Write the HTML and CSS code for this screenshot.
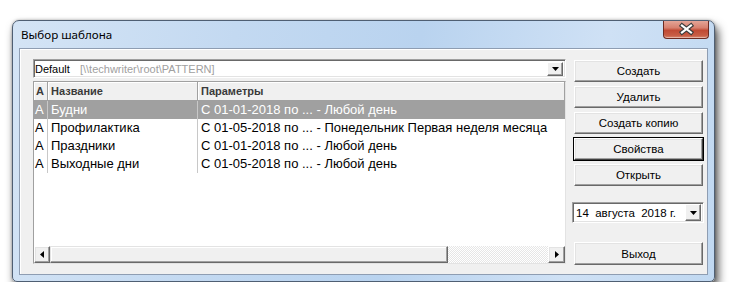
FILE: index.html
```html
<!DOCTYPE html>
<html lang="ru">
<head>
<meta charset="utf-8">
<title>Выбор шаблона</title>
<link rel="stylesheet" href="styles.css">
</head>
<body>
<div class="window">
  <div class="titlebar">
    <span class="title">Выбор шаблона</span>
    <div class="close">
      <svg width="46" height="18" viewBox="0 0 46 18">
        <path d="M18 5.5 L27 12.5 M27 5.5 L18 12.5" stroke="#3b3b3b" stroke-width="4.4" stroke-linecap="square"/>
        <path d="M18 5.5 L27 12.5 M27 5.5 L18 12.5" stroke="#ffffff" stroke-width="2.2" stroke-linecap="square"/>
      </svg>
    </div>
  </div>
  <div class="client">
    <div class="left">
      <div class="combo">
        <span class="combo-text">Default <span class="path">[\\techwriter\root\PATTERN]</span></span>
        <span class="drop"><svg width="7" height="4" viewBox="0 0 7 4"><path d="M0 0 H7 L3.5 4 Z" fill="#000"/></svg></span>
      </div>
      <div class="list">
        <div class="lrow head">
          <div class="hcell c-a">A</div>
          <div class="hcell">Название</div>
          <div class="hcell">Параметры</div>
        </div>
        <div class="rows">
          <div class="lrow item selected">
            <div class="cell c-a">А</div>
            <div class="cell">Будни</div>
            <div class="cell">С 01-01-2018 по ... - Любой день</div>
          </div>
          <div class="lrow item">
            <div class="cell c-a">А</div>
            <div class="cell">Профилактика</div>
            <div class="cell">С 01-05-2018 по ... - Понедельник Первая неделя месяца</div>
          </div>
          <div class="lrow item">
            <div class="cell c-a">А</div>
            <div class="cell">Праздники</div>
            <div class="cell">С 01-01-2018 по ... - Любой день</div>
          </div>
          <div class="lrow item">
            <div class="cell c-a">А</div>
            <div class="cell">Выходные дни</div>
            <div class="cell">С 01-05-2018 по ... - Любой день</div>
          </div>
        </div>
        <div class="hscroll">
          <div class="sbtn"><svg width="4" height="7" viewBox="0 0 4 7"><path d="M4 0 V7 L0 3.5 Z" fill="#000"/></svg></div>
          <div class="thumb"></div>
          <div class="track"></div>
          <div class="sbtn"><svg width="4" height="7" viewBox="0 0 4 7"><path d="M0 0 V7 L4 3.5 Z" fill="#000"/></svg></div>
        </div>
      </div>
    </div>
    <div class="right">
      <div class="btn">Создать</div>
      <div class="btn">Удалить</div>
      <div class="btn">Создать копию</div>
      <div class="btn default">Свойства</div>
      <div class="btn">Открыть</div>
      <div class="date">
        <span class="date-text">14 &nbsp;августа &nbsp;2018 г.</span>
        <span class="drop"><svg width="7" height="4" viewBox="0 0 7 4"><path d="M0 0 H7 L3.5 4 Z" fill="#000"/></svg></span>
      </div>
      <div class="btn exit">Выход</div>
    </div>
  </div>
</div>
</body>
</html>
```
FILE: styles.css
```css
html, body {
  margin: 0;
  background: #ffffff;
}
body {
  font-family: "Liberation Sans", Arial, sans-serif;
  color: #000;
}
.window {
  margin: 20px 0 0 12px;
  width: 703px;
  height: 262px;
  box-sizing: border-box;
  border: 1px solid #4f5f73;
  border-radius: 7px 7px 5px 5px;
  background: linear-gradient(100deg, #d4e4f5 0%, #c3d9f1 30%, #b9d3ef 55%, #cfe1f5 80%, #c0d8f1 100%);
  box-shadow: 3px 6px 10px rgba(0,0,0,0.7), 0 0 3px rgba(0,0,0,0.3);
  display: flex;
  flex-direction: column;
}
.titlebar {
  height: 27px;
  flex: none;
  display: flex;
  justify-content: space-between;
  align-items: flex-start;
}
.title {
  font-family: "Noto Sans", "Open Sans", sans-serif;
  font-size: 11.6px;
  padding: 6px 0 0 8px;
  color: #000;
}
.close {
  width: 46px;
  height: 18px;
  margin-right: 5px;
  box-sizing: border-box;
  border: 1px solid #6d2b22;
  border-top: none;
  border-radius: 0 0 4px 4px;
  background: linear-gradient(#e4a597 0%, #d7806f 40%, #c04a34 55%, #c85d45 85%, #d9876f 100%);
  box-shadow: inset 0 -1px rgba(255,255,255,0.4);
}
.close svg {
  display: block;
  margin-top: -1px;
}
.client {
  flex: 1;
  margin: 0 6px 6px 6px;
  background: #f0f0f0;
  border: 1px solid #8e9db2;
  box-shadow: inset 1px 1px #ffffff;
  display: flex;
  gap: 6px;
  padding: 10px 0 0 13px;
}
.left {
  width: 533px;
  display: flex;
  flex-direction: column;
}
.combo, .date {
  box-sizing: border-box;
  height: 19px;
  background: #fff;
  border: 1px solid;
  border-color: #a0a0a0 #ffffff #ffffff #a0a0a0;
  box-shadow: inset 1px 1px #696969, inset -1px -1px #e3e3e3;
  display: flex;
  align-items: center;
  justify-content: space-between;
  font-size: 11px;
  padding: 0 2px 0 1px;
}
.combo-text {
  white-space: pre;
  padding-left: 0;
}
.path {
  color: #a0a0a0;
  margin-left: 7px;
}
.drop {
  width: 16px;
  height: 14px;
  box-sizing: border-box;
  background: #f0f0f0;
  border: 1px solid;
  border-color: #ffffff #696969 #696969 #ffffff;
  box-shadow: inset -1px -1px #a0a0a0;
  display: flex;
  align-items: center;
  justify-content: center;
}
.list {
  margin-top: 3px;
  height: 183px;
  box-sizing: border-box;
  border: 1px solid;
  border-color: #a0a0a0 #e3e3e3 #e3e3e3 #a0a0a0;
  background: #fff;
  display: flex;
  flex-direction: column;
}
.lrow {
  display: grid;
  grid-template-columns: 14px 150px 1fr;
}
.head {
  height: 19px;
  background: #f0f0f0;
}
.hcell {
  box-sizing: border-box;
  border-right: 1px solid #a0a0a0;
  border-bottom: 1px solid #a0a0a0;
  box-shadow: inset 1px 1px #ffffff;
  font-size: 11px;
  font-weight: bold;
  color: #3a3a3a;
  line-height: 18px;
  padding-left: 3px;
  white-space: nowrap;
  overflow: hidden;
}
.hcell.c-a {
  padding-left: 2px;
}
.rows {
  flex: 1;
}
.item {
  height: 18px;
  font-size: 13px;
  line-height: 18px;
}
.cell {
  padding-left: 3px;
  white-space: nowrap;
  overflow: hidden;
  border-right: 1px solid #c8c8c8;
}
.cell:last-child {
  border-right: none;
}
.cell.c-a {
  padding-left: 1px;
}
.selected {
  background: #a0a0a0;
  color: #ffffff;
}
.hscroll {
  height: 17px;
  display: flex;
  flex: none;
}
.sbtn {
  width: 16px;
  box-sizing: border-box;
  background: #f0f0f0;
  border: 1px solid;
  border-color: #ffffff #696969 #696969 #ffffff;
  box-shadow: inset -1px -1px #a0a0a0, inset 1px 1px #e3e3e3;
  display: flex;
  align-items: center;
  justify-content: center;
}
.sbtn:last-child {
  width: 17px;
}
.thumb {
  width: 398px;
  box-sizing: border-box;
  background: #f0f0f0;
  border: 1px solid;
  border-color: #e3e3e3 #696969 #696969 #e3e3e3;
  box-shadow: inset -1px -1px #a0a0a0, inset 1px 1px #ffffff;
}
.track {
  flex: 1;
  background: repeating-conic-gradient(#e6e6e6 0 25%, #ffffff 0 50%) 0 0 / 2px 2px;
}
.right {
  width: 132px;
  display: flex;
  flex-direction: column;
  padding-top: 1px;
}
.btn {
  box-sizing: border-box;
  height: 22px;
  margin: 0 1px 4px 2px;
  background: #f0f0f0;
  border: 1px solid;
  border-color: #ffffff #696969 #696969 #ffffff;
  box-shadow: inset -1px -1px #a0a0a0, inset 1px 1px #e3e3e3;
  font-size: 11.5px;
  display: flex;
  align-items: center;
  justify-content: center;
}
.btn.default {
  outline: 1px solid #000;
  outline-offset: 0;
  border-color: #ffffff #404040 #404040 #ffffff;
}
.date {
  margin-top: 12px;
  height: 21px;
  font-size: 11.5px;
  padding: 0 2px 0 3px;
}
.date-text {
  white-space: pre;
}
.date .drop {
  height: 17px;
}
.btn.exit {
  margin-top: 19px;
  height: 23px;
}
```
